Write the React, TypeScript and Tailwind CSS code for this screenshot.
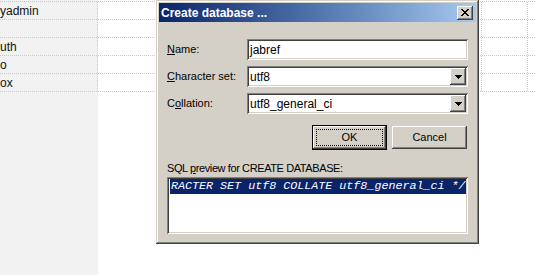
import type { ReactNode } from "react";

const rows = ["yadmin", "", "uth", "o", "ox"];

const raised =
  "shadow-[inset_-1px_-1px_0_#404040,inset_1px_1px_0_#ffffff,inset_-2px_-2px_0_#808080,inset_2px_2px_0_#d4d0c8]";
const sunken =
  "shadow-[inset_1px_1px_0_#808080,inset_-1px_-1px_0_#ffffff,inset_2px_2px_0_#404040,inset_-2px_-2px_0_#d4d0c8]";

function Background() {
  return (
    <div className="flex h-full flex-col bg-[linear-gradient(to_right,#f2f2f2_98px,#ffffff_98px)]">
      <div className="h-px" />
      <div className="border-t border-dotted border-[#c8c8c8]">
        {rows.map((name, i) => (
          <div
            key={i}
            className="grid h-[18px] grid-cols-[98px_384px_46px_1fr] border-b border-dotted border-[#c8c8c8]"
          >
            <div className="flex items-center border-r border-dotted border-[#c8c8c8] text-[12px] leading-none text-[#111]">
              <span className="whitespace-nowrap">{name}</span>
            </div>
            <div className="border-r border-dotted border-[#c8c8c8]" />
            <div className="border-r border-dotted border-[#c8c8c8]" />
            <div />
          </div>
        ))}
      </div>
    </div>
  );
}

function CloseGlyph() {
  const px: [number, number][] = [
    [0, 0], [1, 0], [6, 0], [7, 0],
    [1, 1], [2, 1], [5, 1], [6, 1],
    [2, 2], [3, 2], [4, 2], [5, 2],
    [3, 3], [4, 3],
    [2, 4], [3, 4], [4, 4], [5, 4],
    [1, 5], [2, 5], [5, 5], [6, 5],
    [0, 6], [1, 6], [6, 6], [7, 6],
  ];
  return (
    <svg width="8" height="7" viewBox="0 0 8 7" shapeRendering="crispEdges">
      {px.map(([x, y]) => (
        <rect key={`${x}-${y}`} x={x} y={y} width="1" height="1" fill="#000" />
      ))}
    </svg>
  );
}

function Arrow() {
  return (
    <svg width="7" height="4" viewBox="0 0 7 4" shapeRendering="crispEdges">
      <rect x="0" y="0" width="7" height="1" fill="#000" />
      <rect x="1" y="1" width="5" height="1" fill="#000" />
      <rect x="2" y="2" width="3" height="1" fill="#000" />
      <rect x="3" y="3" width="1" height="1" fill="#000" />
    </svg>
  );
}

function Field({ label, children }: { label: ReactNode; children: ReactNode }) {
  return (
    <div className="flex h-[21px] items-center">
      <div className="w-[80px] text-[11px]">{label}</div>
      {children}
    </div>
  );
}

function TextBox({ value }: { value: string }) {
  return (
    <div className={`flex h-[21px] w-[221px] items-center bg-white pl-[3px] text-[12px] ${sunken}`}>
      {value}
    </div>
  );
}

function Select({ value }: { value: string }) {
  return (
    <div className={`flex h-[21px] w-[221px] items-center bg-white p-[2px] ${sunken}`}>
      <span className="flex-1 pl-px text-[12px]">{value}</span>
      <span className={`flex h-[17px] w-[16px] items-center justify-center bg-[#d4d0c8] ${raised}`}>
        <Arrow />
      </span>
    </div>
  );
}

export default function App() {
  return (
    <div className="relative h-[275px] w-[535px] overflow-hidden bg-white font-['Liberation_Sans',Arial,sans-serif] text-black">
      <Background />

      <div className="absolute left-[156px] top-0 flex h-[244px] w-[323px] flex-col bg-[#d4d0c8] p-[3px] shadow-[inset_-1px_-1px_0_#404040,inset_1px_1px_0_#d4d0c8,inset_-2px_-2px_0_#808080,inset_2px_2px_0_#ffffff]">
        <div className="flex h-[19px] items-center justify-between bg-gradient-to-r from-[#0a246a] to-[#a6caf0] pl-[2px] pr-[3px]">
          <span className="text-[12px] font-bold leading-none text-white">Create database ...</span>
          <span className={`flex h-[14px] w-[16px] items-center justify-center bg-[#d4d0c8] ${raised}`}>
            <CloseGlyph />
          </span>
        </div>

        <div className="flex flex-col px-[8px]">
          <div className="mt-[17px] flex flex-col gap-[6px]">
            <Field label={<><u>N</u>ame:</>}>
              <TextBox value="jabref" />
            </Field>
            <Field label={<><u>C</u>haracter set:</>}>
              <Select value="utf8" />
            </Field>
            <Field label={<>C<u>o</u>llation:</>}>
              <Select value="utf8_general_ci" />
            </Field>
          </div>

          <div className="mt-[11px] flex h-[25px] items-center justify-end gap-[5px] pr-px text-[11px]">
            <button className="flex h-[25px] w-[75px] items-center justify-center border border-black bg-[#d4d0c8] shadow-[inset_-1px_-1px_0_#404040,inset_1px_1px_0_#ffffff,inset_-2px_-2px_0_#808080] outline outline-1 outline-offset-[-5px] outline-dotted outline-black">
              OK
            </button>
            <button className={`flex h-[23px] w-[75px] items-center justify-center bg-[#d4d0c8] ${raised}`}>
              Cancel
            </button>
          </div>

          <div className="mt-[12px] h-[13px] text-[11px] leading-[13px] tracking-[-0.4px]">
            SQL <u>p</u>review for CREATE DATABASE:
          </div>

          <div className={`mt-[2px] h-[57px] w-[301px] overflow-hidden bg-white p-[2px] ${sunken}`}>
            <div className="ml-px flex h-[15px] items-center overflow-hidden whitespace-nowrap bg-[#0a246a] pl-px font-['Liberation_Mono',monospace] text-[11.7px] italic leading-none text-white">
              RACTER SET utf8 COLLATE utf8_general_ci */
            </div>
          </div>
        </div>
      </div>
    </div>
  );
}
